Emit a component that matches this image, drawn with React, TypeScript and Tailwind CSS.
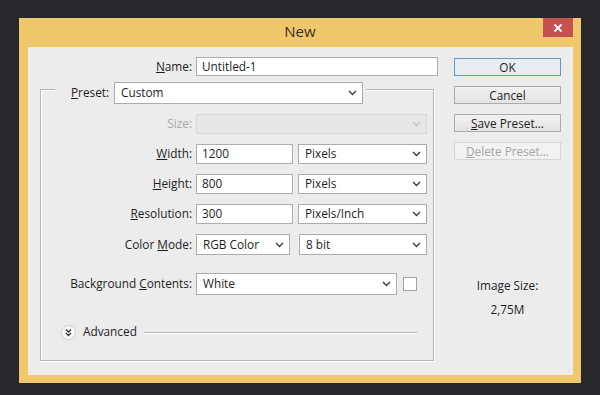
import type { ReactNode } from 'react';

function Chevron({ color = '#3a3a3a' }: { color?: string }) {
    return (
        <svg width="9" height="6" viewBox="0 0 9 6">
            <path d="M1 1l3.5 3.5L8 1" fill="none" stroke={color} strokeWidth="1.4" />
        </svg>
    );
}

function Select({
    value,
    className,
    disabled,
}: {
    value?: string;
    className: string;
    disabled?: boolean;
}) {
    return (
        <div
            className={`${className} flex items-center justify-between pl-[6px] pr-[5px] border ${
                disabled ? 'border-[#d9d9d9] bg-[#e6e6e6]' : 'border-[#acacac] bg-white'
            }`}
        >
            <span>{value}</span>
            <Chevron color={disabled ? '#c4c4c4' : '#3a3a3a'} />
        </div>
    );
}

function TextBox({ value, className }: { value: string; className: string }) {
    return (
        <div className={`${className} flex items-center pl-[5px] border border-[#abadb3] bg-white`}>
            {value}
        </div>
    );
}

function Row({ label, children, muted }: { label: ReactNode; children: ReactNode; muted?: boolean }) {
    return (
        <div className="flex items-center">
            <div className={`w-[151px] text-right ${muted ? 'text-[#a8a8a8]' : ''}`}>{label}</div>
            <div className="ml-[4px] flex items-center">{children}</div>
        </div>
    );
}

function Button({ children, kind }: { children: ReactNode; kind?: 'default' | 'disabled' }) {
    const look =
        kind === 'default'
            ? 'border-[#5d9ad3] bg-[#e7edf3]'
            : kind === 'disabled'
              ? 'border-[#d6d6d6] bg-[#f2f2f2] text-[#a6a6a6]'
              : 'border-[#acacac] bg-gradient-to-b from-[#f2f2f2] to-[#e3e3e3]';
    return (
        <div className={`h-[18px] border text-center leading-[16px] ${look}`}>{children}</div>
    );
}

export default function App() {
    return (
        <div className="w-[600px] h-[395px] bg-[#28282c] pt-[18px] pl-[19px] font-['Open_Sans','Noto_Sans',sans-serif] text-[11.8px] text-[#1e1e1e]">
            <div className="w-[562px] h-[365px] bg-[#efc86c] flex flex-col">
                <div className="h-[29px] shrink-0 flex items-start">
                    <div className="w-[38px]" />
                    <div className="flex-1 text-center text-[15px] leading-[20px] pt-[3px] text-[#3b3020]">
                        New
                    </div>
                    <div className="w-[30px] h-[19px] mr-[8px] bg-[#c75050] flex items-center justify-center">
                        <svg width="10" height="10" viewBox="0 0 10 10">
                            <path d="M1.5 1.5l7 7M8.5 1.5l-7 7" stroke="#fff" strokeWidth="1.8" />
                        </svg>
                    </div>
                </div>

                <div className="ml-[9px] mr-[8px] mb-[8px] flex-1 bg-[#ececec] flex pt-[10px]">
                    <div className="w-[410px]">
                        <div className="flex items-center">
                            <div className="w-[164px] text-right">
                                <u>N</u>ame:
                            </div>
                            <TextBox value="Untitled-1" className="ml-[4px] w-[242px] h-[19px]" />
                        </div>

                        <div className="mt-[13px] ml-[12px] w-[394px] h-[272px] border border-[#b6b6b6] shadow-[1px_1px_0_#fff,inset_1px_1px_0_#fff] flex flex-col">
                            <div className="-mt-[8px] ml-[14px] w-fit bg-[#ececec] pl-[16px] pr-[3px] flex items-center">
                                <div className="w-[43px]">
                                    <u>P</u>reset:
                                </div>
                                <Select value="Custom" className="w-[249px] h-[22px]" />
                            </div>

                            <div className="mt-[10px] flex flex-col gap-[10px]">
                                <Row label="Size:" muted>
                                    <Select disabled className="w-[231px] h-[20px]" />
                                </Row>
                                <Row label={<><u>W</u>idth:</>}>
                                    <TextBox value="1200" className="w-[97px] h-[20px]" />
                                    <Select value="Pixels" className="ml-[5px] w-[129px] h-[20px]" />
                                </Row>
                                <Row label={<><u>H</u>eight:</>}>
                                    <TextBox value="800" className="w-[97px] h-[20px]" />
                                    <Select value="Pixels" className="ml-[5px] w-[129px] h-[20px]" />
                                </Row>
                                <Row label={<><u>R</u>esolution:</>}>
                                    <TextBox value="300" className="w-[97px] h-[20px]" />
                                    <Select value="Pixels/Inch" className="ml-[5px] w-[129px] h-[20px]" />
                                </Row>
                                <Row label={<>Color <u>M</u>ode:</>}>
                                    <Select value="RGB Color" className="w-[94px] h-[21px]" />
                                    <Select value="8 bit" className="ml-[9px] w-[128px] h-[21px]" />
                                </Row>
                            </div>

                            <div className="mt-[18px]">
                                <Row label={<>Background <u>C</u>ontents:</>}>
                                    <Select value="White" className="w-[201px] h-[22px]" />
                                    <div className="ml-[6px] w-[14px] h-[14px] border border-[#a3a3a3] bg-white" />
                                </Row>
                            </div>

                            <div className="mt-[29px] h-[16px] flex items-center pl-[20px] pr-[16px]">
                                <svg width="15" height="15" viewBox="0 0 15 15">
                                    <circle cx="7.5" cy="7.5" r="7" fill="#f7f7f7" stroke="#cfcfcf" />
                                    <path d="M5 4.5l2.5 2.5L10 4.5M5 8l2.5 2.5L10 8" fill="none" stroke="#333" strokeWidth="1.3" />
                                </svg>
                                <span className="ml-[7px]">Advanced</span>
                                <div className="ml-[7px] flex-1 h-0 border-t border-[#b4b4b4] shadow-[0_1px_0_#fff]" />
                            </div>
                        </div>
                    </div>

                    <div className="ml-[16px] w-[107px] pt-[1px] flex flex-col">
                        <div className="flex flex-col gap-[10px]">
                            <Button kind="default">OK</Button>
                            <Button>Cancel</Button>
                            <Button>
                                <u>S</u>ave Preset...
                            </Button>
                            <Button kind="disabled">
                                <u>D</u>elete Preset...
                            </Button>
                        </div>
                        <div className="mt-[117px] text-center leading-[16px]">Image Size:</div>
                        <div className="mt-[8px] text-center leading-[16px]">2,75M</div>
                    </div>
                </div>
            </div>
        </div>
    );
}
